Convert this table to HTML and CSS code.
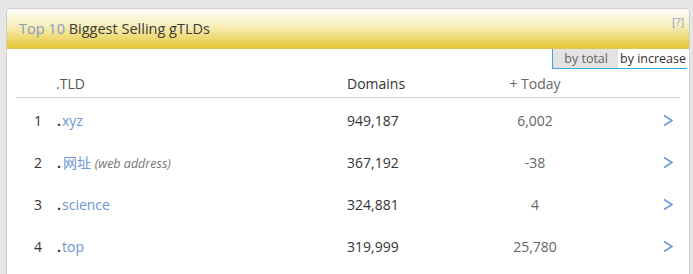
FILE: index.html
```html
<!DOCTYPE html>
<html>
<head>
<meta charset="utf-8">
<link rel="stylesheet" href="styles.css">
</head>
<body>
<div class="card">
  <div class="head">
    <h2 class="title"><span class="hl">Top 10</span> Biggest Selling gTLDs</h2>
    <a class="help">[?]</a>
  </div>
  <div class="toggle-row">
    <div class="toggle">
      <span class="tab active">by total</span><span class="tab">by increase</span>
    </div>
  </div>
  <div class="table">
    <div class="row thead">
      <span class="rank"></span>
      <span class="tld">.TLD</span>
      <span class="dom">Domains</span>
      <span class="today">+ Today</span>
      <span class="go"></span>
    </div>
    <div class="row">
      <span class="rank">1</span>
      <span class="tld"><b class="dot">.</b><a>xyz</a></span>
      <span class="dom">949,187</span>
      <span class="today">6,002</span>
      <span class="go"><svg class="chev" width="10" height="13" viewBox="0 0 10 13"><polyline points="1,1.5 9,6.5 1,11.5"/></svg></span>
    </div>
    <div class="row">
      <span class="rank">2</span>
      <span class="tld"><b class="dot">.</b><a class="cjk">网址</a> <i class="note">(web address)</i></span>
      <span class="dom">367,192</span>
      <span class="today">-38</span>
      <span class="go"><svg class="chev" width="10" height="13" viewBox="0 0 10 13"><polyline points="1,1.5 9,6.5 1,11.5"/></svg></span>
    </div>
    <div class="row">
      <span class="rank">3</span>
      <span class="tld"><b class="dot">.</b><a>science</a></span>
      <span class="dom">324,881</span>
      <span class="today">4</span>
      <span class="go"><svg class="chev" width="10" height="13" viewBox="0 0 10 13"><polyline points="1,1.5 9,6.5 1,11.5"/></svg></span>
    </div>
    <div class="row">
      <span class="rank">4</span>
      <span class="tld"><b class="dot">.</b><a>top</a></span>
      <span class="dom">319,999</span>
      <span class="today">25,780</span>
      <span class="go"><svg class="chev" width="10" height="13" viewBox="0 0 10 13"><polyline points="1,1.5 9,6.5 1,11.5"/></svg></span>
    </div>
  </div>
</div>
</body>
</html>
```
FILE: styles.css
```css
html, body {
  margin: 0;
  padding: 0;
  height: 100%;
  overflow: hidden;
}
body {
  background: #e6e6e6;
  font-family: "Open Sans", "Noto Sans CJK SC", sans-serif;
  color: #333;
}
.card {
  margin: 8px 3px 0 6px;
  background: #fff;
  border: 1px solid #cdcdcd;
  border-bottom: none;
  border-radius: 5px 5px 0 0;
  height: 300px;
}
.head {
  height: 39px;
  border-radius: 4px 4px 0 0;
  background: linear-gradient(#fffefa 0%, #f7eeb9 45%, #e5c733 100%);
  border-bottom: 1px solid #dcc45a;
  display: flex;
  justify-content: space-between;
  align-items: flex-start;
  padding: 0 5px 0 12px;
}
.title {
  margin: 0;
  font-size: 14.5px;
  font-weight: normal;
  line-height: 18px;
  padding-top: 11px;
  color: #3a3a3a;
}
.hl { color: #8a9ac6; }
.help {
  font-size: 11px;
  color: #8aa0c8;
  padding-top: 5px;
}
.toggle-row {
  display: flex;
  justify-content: flex-end;
  padding-right: 2px;
}
.toggle {
  display: flex;
  border-left: 1px solid #35a9e1;
  border-bottom: 1px solid #35a9e1;
  height: 19px;
  font-size: 12.5px;
  line-height: 19px;
}
.tab {
  padding: 0 1px 0 2px;
  color: #333;
  background: #fff;
}
.tab.active {
  background: #e3e3e3;
  color: #666;
  padding: 0 10px 0 11px;
}
.table {
  margin: 0 9px 0 9px;
}
.row {
  display: flex;
  align-items: center;
  height: 42px;
  font-size: 14px;
}
.row.thead {
  height: 28px;
  font-size: 14px;
  color: #555;
  border-bottom: 1px solid #d2d2d2;
  margin-bottom: 1px;
}
.rank {
  width: 26px;
  text-align: right;
  color: #333;
}
.tld {
  width: 305px;
  padding-left: 15px;
  box-sizing: border-box;
}
.thead .tld { padding-left: 14px; }
.dot { color: #333; font-weight: bold; margin-right: 1px; }
.tld a { color: #6a96d4; }
.tld a.cjk { margin-left: 1px; }
.note { font-size: 12.5px; color: #777; }
.dom {
  width: 130px;
  color: #333;
}
.today {
  width: 116px;
  text-align: center;
  color: #666;
}
.go {
  flex: 1;
  display: flex;
  justify-content: flex-end;
  padding-right: 7px;
}
.chev {
  display: block;
  fill: none;
  stroke: #6a96d4;
  stroke-width: 1.5;
}
```
